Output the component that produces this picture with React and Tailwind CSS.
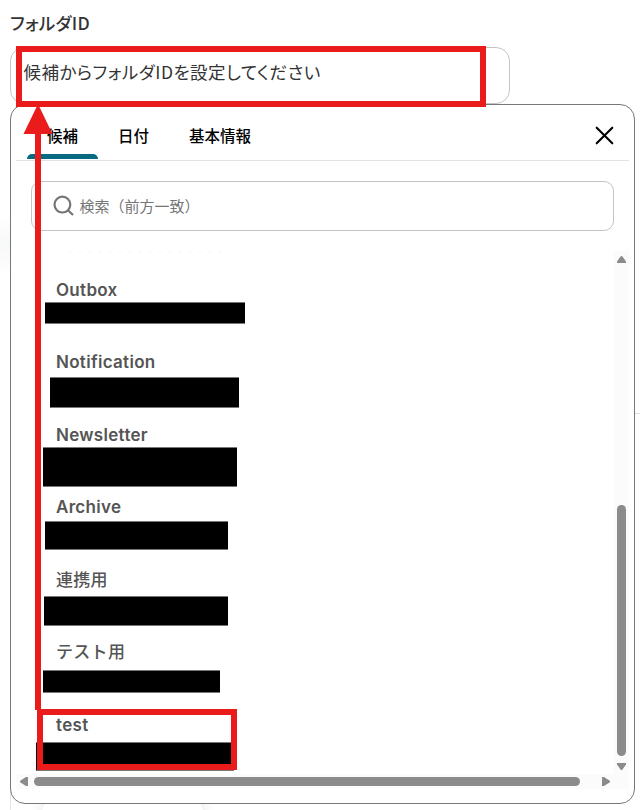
const folders = [
  { name: 'Outbox', weight: 'font-semibold', mask: 'left-[45px] top-[302px] w-[200px] h-[22px]' },
  { name: 'Notification', weight: 'font-semibold', mask: 'left-[50px] top-[377px] w-[189px] h-[31px]' },
  { name: 'Newsletter', weight: 'font-semibold', mask: 'left-[43px] top-[447px] w-[194px] h-[40px]' },
  { name: 'Archive', weight: 'font-semibold', mask: 'left-[45px] top-[521px] w-[183px] h-[29px]' },
  { name: '連携用', weight: 'font-medium', mask: 'left-[44px] top-[596px] w-[184px] h-[30px]' },
  { name: 'テスト用', weight: 'font-medium', mask: 'left-[43px] top-[670px] w-[177px] h-[23px]' },
  { name: 'test', weight: 'font-semibold', mask: 'left-[36px] top-[742px] w-[198px] h-[29px]' },
];

function Tab({ label, active, className }) {
  return (
    <button className={`relative flex h-[55px] items-center justify-center pt-[7px] text-[15.5px] font-medium text-black ${className}`}>
      {label}
      {active && <span className="absolute inset-x-0 bottom-px h-[5px] rounded-t-[5px] bg-[#086a80]" />}
    </button>
  );
}

function SearchField() {
  return (
    <div className="mt-5 ml-[15px] flex h-[50px] w-[583px] items-center rounded-[10px] border border-[#c4c4c4] pl-[21px]">
      <svg width="22" height="22" viewBox="0 0 22 22" fill="none" stroke="#757575" strokeWidth="2.2">
        <circle cx="9.4" cy="9.6" r="7.9" />
        <path d="M15 15.2 L20 20" />
      </svg>
      <span className="ml-[4.5px] text-[15px] text-[#757575]">検索（前方一致）</span>
    </div>
  );
}

function Annotations() {
  return (
    <>
      <div className="absolute left-[16px] top-[46px] h-[61px] w-[470px] border-[6px] border-[#e91b1b]" />
      <svg className="absolute left-[23px] top-[104px]" width="30" height="606" viewBox="0 0 30 606" fill="#e91b1b">
        <path d="M15 0 L29.5 30 H0.5 Z" />
        <rect x="12" y="28" width="6" height="578" />
      </svg>
      <div className="absolute left-[37px] top-[709px] h-[61px] w-[200px] border-[6px] border-[#e91b1b]" />
    </>
  );
}

export default function App() {
  return (
    <div className="relative flex h-[810px] w-[640px] flex-col overflow-hidden bg-white pl-[10px] font-['Inter','Noto_Sans_CJK_JP',sans-serif] text-[#333]">
      <div className="absolute left-0 top-[215px] h-[60px] w-[10px] bg-linear-to-b from-white via-[#f7f8f8] to-white" />
      <div className="absolute left-[10px] top-[780px] h-[30px] w-px bg-[#e4e4e4]" />
      <div className="absolute left-[634px] top-[413px] h-px w-[6px] bg-[#dddddd]" />
      <div className="absolute left-[42px] top-[797px] h-[40px] w-[161px] rounded-[16px] bg-white shadow-[0_0_14px_rgba(0,0,0,0.12)]" />
      <label className="flex h-[47px] items-center pb-[1px] font-['Noto_Sans_CJK_JP',sans-serif] text-[17.5px] font-medium leading-[26px] tracking-[0.3px] [font-feature-settings:'palt']">フォルダID</label>
      <div className="h-[57px] w-[500px] shrink-0 rounded-[14px] border border-[#c4c4c4] pl-[12.5px] pt-[11px] font-['Noto_Sans_CJK_JP',sans-serif] text-[17.5px] leading-[26px] tracking-[0.5px] [font-feature-settings:'palt']">
        候補からフォルダIDを設定してください
      </div>
      <section className="relative flex h-[700px] w-[625px] shrink-0 flex-col rounded-[15px] border border-[#777777] bg-white px-[5px] font-['Noto_Sans_CJK_JP',sans-serif]">
        <header className="flex h-[56px] shrink-0 border-b border-[#e2e2e2] pl-[11px]">
          <Tab label="候補" active className="w-[71px]" />
          <Tab label="日付" className="w-[71px]" />
          <Tab label="基本情報" className="w-[102px]" />
          <svg className="ml-auto mr-[15px] mt-[21px]" width="19" height="19" viewBox="0 0 19 19" fill="none" stroke="black" strokeWidth="2.1" strokeLinecap="round">
            <path d="M1.7 1.7 L17.3 17.3 M17.3 1.7 L1.7 17.3" />
          </svg>
        </header>
        <SearchField />
        <div className="mt-5 grid h-[538px] grid-cols-[1fr_15px] grid-rows-[1fr_15px]">
          <div className="overflow-hidden pl-10">
            <div className="ml-[13px] h-px w-[153px] bg-[repeating-linear-gradient(90deg,#f2f2f2_0_2px,transparent_2px_10px)]" />
            <ul className="pt-[25px]">
              {folders.map((folder) => (
                <li key={folder.name} className={`h-[72.45px] font-['Inter','Noto_Sans_CJK_JP',sans-serif] text-[17px] leading-[26px] tracking-[0.3px] text-[#555555] ${folder.weight}`}>
                  {folder.name}
                </li>
              ))}
            </ul>
          </div>
          <div className="flex flex-col items-center bg-[#fbfbfb] pt-[5px]">
            <svg width="9" height="7" viewBox="0 0 9 7" fill="#8b8b8b"><path d="M3.5 .5Q4.5-.5 5.5 .5L9 5.5V7H0V5.5Z" /></svg>
            <div className="mt-[242px] h-[251px] w-[9px] rounded-full bg-[#8b8b8b]" />
            <svg className="mt-[7px]" width="9" height="7" viewBox="0 0 9 7" fill="#8b8b8b"><path d="M3.5 6.5Q4.5 7.5 5.5 6.5L9 1.5V0H0V1.5Z" /></svg>
          </div>
          <div className="col-span-2 flex items-center bg-[#fbfbfb] pl-[4px]">
            <svg width="8" height="9" viewBox="0 0 8 9" fill="#8b8b8b"><path d="M.5 3.5Q-.5 4.5 .5 5.5L6 9H8V0H6Z" /></svg>
            <div className="ml-[6px] h-[9px] w-[546px] rounded-full bg-[#8b8b8b]" />
            <svg className="ml-[22px]" width="8" height="9" viewBox="0 0 8 9" fill="#8b8b8b"><path d="M7.5 3.5Q8.5 4.5 7.5 5.5L2 9H0V0H2Z" /></svg>
          </div>
        </div>
      </section>
      {folders.map((folder) => (
        <div key={folder.name} className={`absolute border-y border-[#777777] bg-black ${folder.mask}`} />
      ))}
      <Annotations />
    </div>
  );
}
